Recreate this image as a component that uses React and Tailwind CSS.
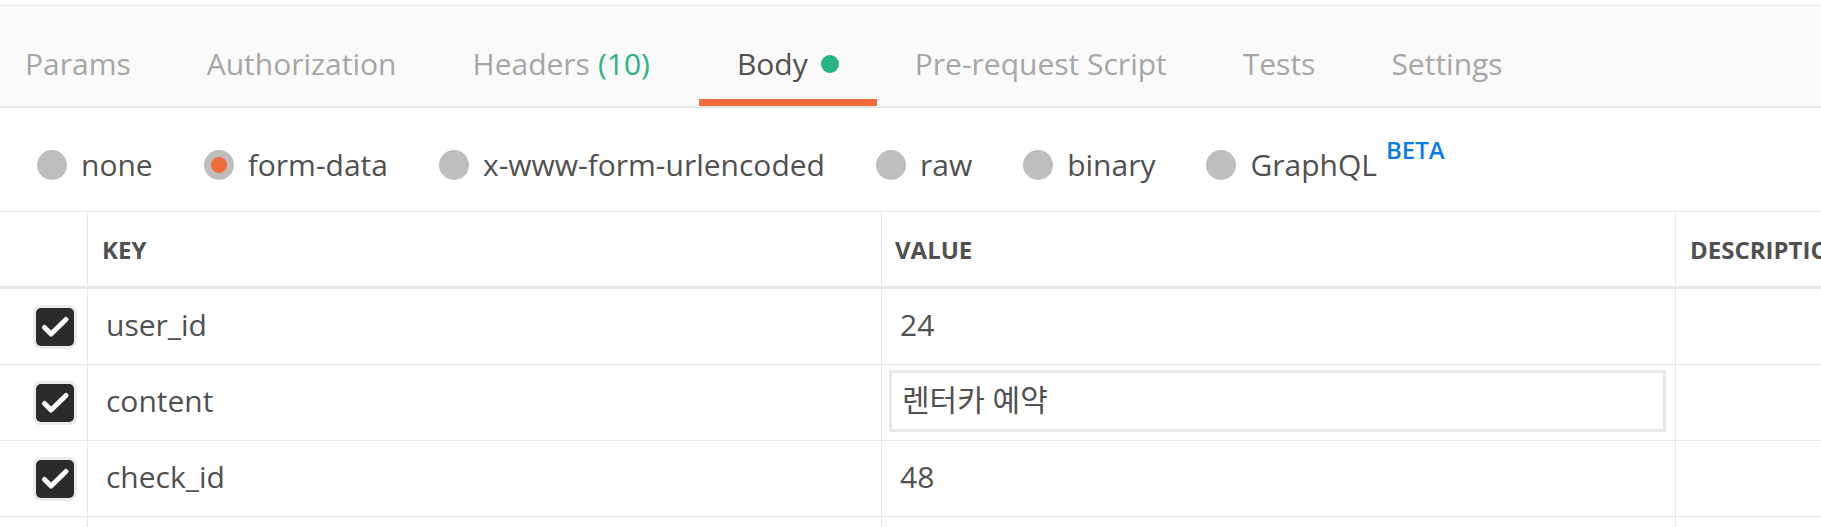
import { Fragment } from 'react'

const TABS = [
  { label: 'Params', cls: 'pl-[25px] pr-[38px]' },
  { label: 'Authorization', cls: 'px-[38px]' },
  { label: 'Headers', count: '(10)', cls: 'px-[38px]' },
  { label: 'Body', active: true, dot: true, cls: 'px-[38px] ml-[11px]' },
  { label: 'Pre-request Script', cls: 'px-[38px]' },
  { label: 'Tests', cls: 'px-[38px]' },
  { label: 'Settings', cls: 'px-[38px]' },
]

const MODES = ['none', 'form-data', 'x-www-form-urlencoded', 'raw', 'binary', 'GraphQL']

const ROWS = [
  { key: 'user_id', value: '24' },
  { key: 'content', value: '렌터카 예약', editing: true },
  { key: 'check_id', value: '48' },
]

function Checkbox() {
  return (
    <div className="w-[44px] h-[44px] rounded-[7px] bg-[#ebebeb] p-[3px]">
      <div className="w-[38px] h-[38px] rounded-[5px] bg-[#2b2b2b] flex items-center justify-center">
        <svg width="38" height="38" viewBox="0 0 38 38" fill="none">
          <path d="M8.5 19.5 L15 26 L30 11.5" stroke="#fff" strokeWidth="5" strokeLinecap="round" strokeLinejoin="round" />
        </svg>
      </div>
    </div>
  )
}

function Radio({ checked }) {
  return (
    <span className="w-[30px] h-[30px] rounded-full bg-[#bebebe] flex items-center justify-center shrink-0">
      {checked && <span className="w-[16px] h-[16px] rounded-full bg-[#f26b3a]" />}
    </span>
  )
}

const cell = 'border-r border-[#e8e8e8] flex items-center'

export default function App() {
  return (
    <div className="w-full h-[527px] overflow-hidden bg-white text-[#505050] font-['Open_Sans','Noto_Sans_CJK_KR',sans-serif]">
      <div className="h-[5px]" />

      {/* tabs */}
      <div className="h-[103px] bg-[#fafafa] border-t border-[#e8e8e8] border-b-2 border-b-[#e6e6e6] flex whitespace-nowrap">
        {TABS.map(t => (
          <div
            key={t.label}
            className={`${t.cls} h-[100px] pt-[37px] border-b-[7px] ${t.active ? 'border-[#f26b3a] text-[#505050]' : 'border-transparent text-[#a6a6a6]'}`}
          >
            <div className="flex items-center h-[41px] text-[30px] leading-[41px]">
              <span>{t.label}</span>
              {t.count && <span className="ml-[8px] text-[#26b47f]">{t.count}</span>}
              {t.dot && <span className="ml-[13px] w-[18px] h-[18px] rounded-full bg-[#26b47f]" />}
            </div>
          </div>
        ))}
      </div>

      {/* body modes */}
      <div className="h-[103px] pt-[10px] pl-[37px] flex items-center gap-[51px] whitespace-nowrap">
        {MODES.map(m => (
          <div key={m} className="flex items-center gap-[14px]">
            <Radio checked={m === 'form-data'} />
            <span className="text-[30px] leading-[41px]">
              {m}
              {m === 'GraphQL' && (
                <span className="ml-[9px] text-[24px] font-semibold text-[#097bed] leading-[0] align-[17px]">BETA</span>
              )}
            </span>
          </div>
        ))}
      </div>

      {/* key / value table */}
      <div className="border-t border-[#e6e6e6] w-[2200px]">
        <div className="grid grid-cols-[88px_794px_794px_524px] h-[77px] border-b-[3px] border-[#e6e6e6] text-[24px] font-bold">
          <div className={cell} />
          <div className={`${cell} pl-[14px] pt-[2px]`}>KEY</div>
          <div className={`${cell} pl-[13px] pt-[2px]`}>VALUE</div>
          <div className="flex items-center pl-[14px] pt-[2px]">DESCRIPTION</div>
        </div>

        {ROWS.map(r => (
          <div key={r.key} className="grid grid-cols-[88px_794px_794px_524px] h-[76px] border-b border-[#e8e8e8] text-[30px]">
            <div className={`${cell} pl-[33px]`}>
              <Checkbox />
            </div>
            <div className={`${cell} pl-[18px] pb-[4px]`}>{r.key}</div>
            {r.editing ? (
              <div className="border-r border-[#e8e8e8] pt-[5px] pl-[7px] pr-[9px]">
                <div className="h-[62px] border-[3px] border-[#e8e8e8] pl-[10px] pb-[4px] flex items-center">{r.value}</div>
              </div>
            ) : (
              <div className={`${cell} pl-[18px] pb-[4px]`}>{r.value}</div>
            )}
            <div />
          </div>
        ))}

        <div className="grid grid-cols-[88px_794px_794px_524px] h-[76px]">
          {[0, 1, 2].map(i => (
            <Fragment key={i}>
              <div className="border-r border-[#e8e8e8]" />
            </Fragment>
          ))}
          <div />
        </div>
      </div>
    </div>
  )
}
